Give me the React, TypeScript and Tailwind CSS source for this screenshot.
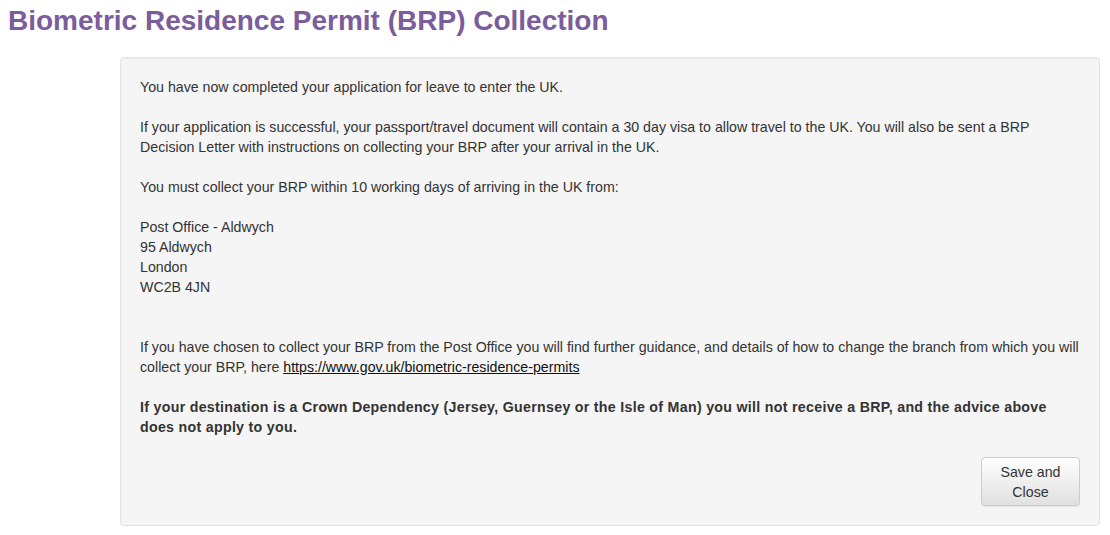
export default function App() {
  return (
    <div className="w-[1110px] h-[535px] bg-white font-['Liberation_Sans',Arial,sans-serif] text-[14.2px] leading-[20px] text-[#333]">
      <h1 className="pl-[8px] pt-[4px] text-[28px] leading-[34px] font-bold text-[#7b5c9c]">
        Biometric Residence Permit (BRP) Collection
      </h1>
      <div className="ml-[120px] mt-[19px] w-[980px] h-[469px] bg-[#f5f5f5] border border-[#e3e3e3] rounded-[4px] shadow-[inset_0_1px_1px_rgba(0,0,0,0.05)] px-[19px] pt-[19px] pb-[19px] flex flex-col">
        <p>You have now completed your application for leave to enter the UK.</p>
        <p className="mt-[20px]">
          If your application is successful, your passport/travel document will contain a 30 day visa to allow travel to the UK. You will also be sent a BRP Decision Letter with instructions on collecting your BRP after your arrival in the UK.
        </p>
        <p className="mt-[20px]">You must collect your BRP within 10 working days of arriving in the UK from:</p>
        <p className="mt-[20px]">
          Post Office - Aldwych<br />95 Aldwych<br />London<br />WC2B 4JN
        </p>
        <p className="mt-[40px]">
          If you have chosen to collect your BRP from the Post Office you will find further guidance, and details of how to change the branch from which you will collect your BRP, here{" "}
          <a href="#" className="underline text-[#111]">https://www.gov.uk/biometric-residence-permits</a>
        </p>
        <p className="mt-[20px] font-bold tracking-[0.3px]">
          If your destination is a Crown Dependency (Jersey, Guernsey or the Isle of Man) you will not receive a BRP, and the advice above does not apply to you.
        </p>
        <div className="mt-auto flex justify-end">
          <button className="w-[99px] h-[49px] rounded-[4px] border border-[#ccc] bg-gradient-to-b from-white to-[#e0e0e0] text-[#333] shadow-[inset_0_1px_0_rgba(255,255,255,0.15),0_1px_1px_rgba(0,0,0,0.075)] leading-[20px]">
            Save and<br />Close
          </button>
        </div>
      </div>
    </div>
  );
}
